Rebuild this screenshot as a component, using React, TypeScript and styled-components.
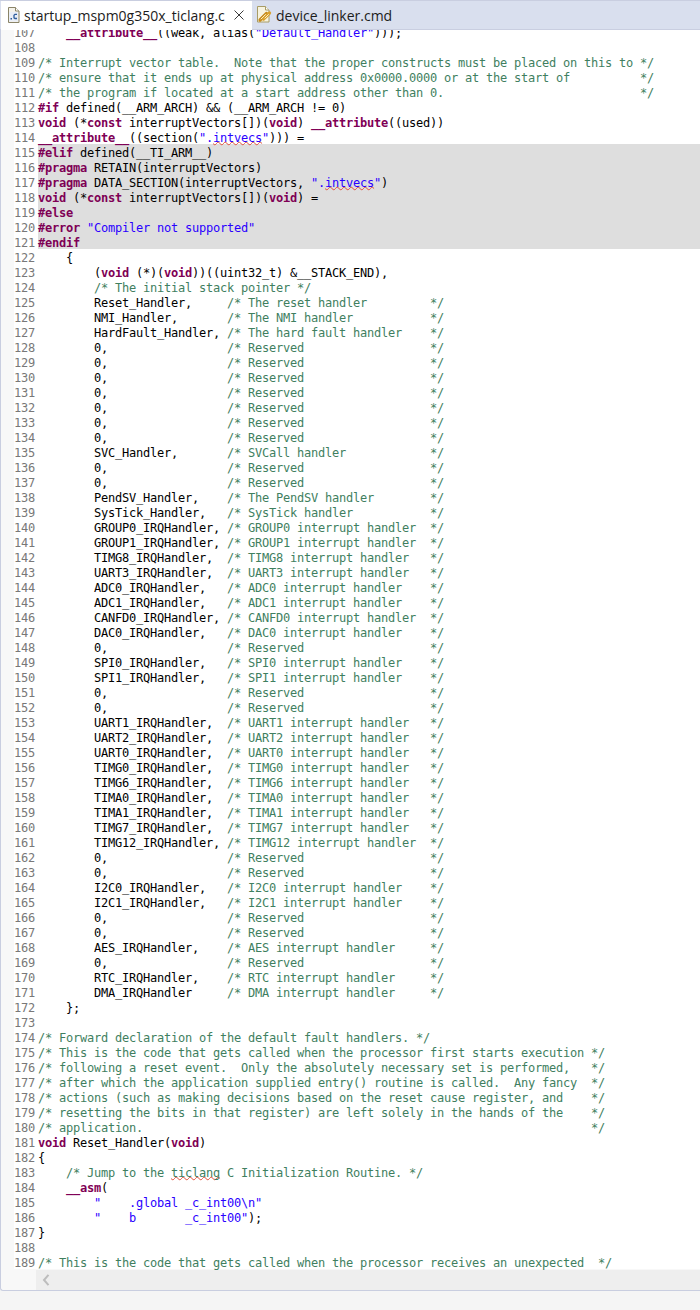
import React from "react";
import styled, { createGlobalStyle } from "styled-components";

const GlobalStyle = createGlobalStyle`
  html, body {
    margin: 0;
    padding: 0;
    background: #f5f5f5;
  }
`;

const Page = styled.div`
  width: 700px;
  height: 1310px;
  display: flex;
  flex-direction: column;
  overflow: hidden;
`;

const TabBar = styled.div`
  height: 30px;
  flex: none;
  display: flex;
  background: #d9dfee;
  border-top: 1px solid #c9cee0;
  border-bottom: 1px solid #c9cee0;
  box-sizing: border-box;
`;

const Tab = styled.div<{ $active?: boolean }>`
  display: flex;
  align-items: center;
  height: ${(p) => (p.$active ? "29px" : "100%")};
  box-sizing: border-box;
  padding-left: ${(p) => (p.$active ? "6px" : "4px")};
  padding-bottom: 1px;
  margin-left: ${(p) => (p.$active ? "1px" : "0")};
  width: ${(p) => (p.$active ? "251px" : "auto")};
  background: ${(p) => (p.$active ? "#ffffff" : "transparent")};
`;

const TabIcon = styled.svg`
  flex: none;
  margin-right: 4px;
`;

const TabLabel = styled.span`
  font-family: "Open Sans", sans-serif;
  font-size: 14px;
  line-height: 20px;
  padding-top: 2px;
  color: #1c1c1c;
  white-space: nowrap;
`;

const CloseButton = styled.svg`
  margin-left: 9px;
  flex: none;
`;

const Editor = styled.div`
  height: 1261px;
  flex: none;
  box-sizing: border-box;
  display: flex;
  flex-direction: column;
  background: #f8f8f8;
  border-left: 1px solid #c9cee0;
  border-bottom: 1px solid #c9cee0;
  border-bottom-left-radius: 3px;
`;

const Viewport = styled.div`
  height: 1240px;
  flex: none;
  overflow: hidden;
`;

const Lines = styled.div`
  margin-top: -6px;
`;

const Row = styled.div`
  display: flex;
  height: 15px;
  padding-left: 13px;
  font-family: "DejaVu Sans Mono", monospace;
  font-size: 12px;
  letter-spacing: -0.224px;
  line-height: 18px;
  white-space: pre;
`;

const LineNumber = styled.span`
  width: 21px;
  padding-right: 3px;
  flex: none;
  text-align: right;
  color: #787878;
  background: #ffffff;
`;

const Code = styled.span<{ $masked?: boolean }>`
  flex: 1;
  color: #000000;
  background: ${(p) => (p.$masked ? "#dedede" : "#ffffff")};
`;

// descenders and underscores hang over the next row, keep them above its background
const CodeText = styled.span`
  position: relative;
  z-index: 1;
`;

const Keyword = styled.span`
  color: #7f0055;
  font-weight: bold;
`;

const Comment = styled.span`
  color: #3f7f5f;
`;

const Str = styled.span`
  color: #2a00ff;
`;

const Misspelled = styled.span`
  text-decoration: underline wavy #e0503a 1px;
  text-decoration-skip-ink: none;
  text-underline-offset: -1px;
`;

const ScrollTrack = styled.div`
  height: 20px;
  flex: none;
  margin-left: 35px;
  display: flex;
  align-items: center;
  padding-left: 5px;
  background: #eeeeee;
`;

const COMMENT_WIDTH = 29;

// handler table, line 125 to 171
const vectors: [string, string][] = [
  ["Reset_Handler,", "The reset handler"],
  ["NMI_Handler,", "The NMI handler"],
  ["HardFault_Handler,", "The hard fault handler"],
  ["0,", "Reserved"],
  ["0,", "Reserved"],
  ["0,", "Reserved"],
  ["0,", "Reserved"],
  ["0,", "Reserved"],
  ["0,", "Reserved"],
  ["0,", "Reserved"],
  ["SVC_Handler,", "SVCall handler"],
  ["0,", "Reserved"],
  ["0,", "Reserved"],
  ["PendSV_Handler,", "The PendSV handler"],
  ["SysTick_Handler,", "SysTick handler"],
  ["GROUP0_IRQHandler,", "GROUP0 interrupt handler"],
  ["GROUP1_IRQHandler,", "GROUP1 interrupt handler"],
  ["TIMG8_IRQHandler,", "TIMG8 interrupt handler"],
  ["UART3_IRQHandler,", "UART3 interrupt handler"],
  ["ADC0_IRQHandler,", "ADC0 interrupt handler"],
  ["ADC1_IRQHandler,", "ADC1 interrupt handler"],
  ["CANFD0_IRQHandler,", "CANFD0 interrupt handler"],
  ["DAC0_IRQHandler,", "DAC0 interrupt handler"],
  ["0,", "Reserved"],
  ["SPI0_IRQHandler,", "SPI0 interrupt handler"],
  ["SPI1_IRQHandler,", "SPI1 interrupt handler"],
  ["0,", "Reserved"],
  ["0,", "Reserved"],
  ["UART1_IRQHandler,", "UART1 interrupt handler"],
  ["UART2_IRQHandler,", "UART2 interrupt handler"],
  ["UART0_IRQHandler,", "UART0 interrupt handler"],
  ["TIMG0_IRQHandler,", "TIMG0 interrupt handler"],
  ["TIMG6_IRQHandler,", "TIMG6 interrupt handler"],
  ["TIMA0_IRQHandler,", "TIMA0 interrupt handler"],
  ["TIMA1_IRQHandler,", "TIMA1 interrupt handler"],
  ["TIMG7_IRQHandler,", "TIMG7 interrupt handler"],
  ["TIMG12_IRQHandler,", "TIMG12 interrupt handler"],
  ["0,", "Reserved"],
  ["0,", "Reserved"],
  ["I2C0_IRQHandler,", "I2C0 interrupt handler"],
  ["I2C1_IRQHandler,", "I2C1 interrupt handler"],
  ["0,", "Reserved"],
  ["0,", "Reserved"],
  ["AES_IRQHandler,", "AES interrupt handler"],
  ["0,", "Reserved"],
  ["RTC_IRQHandler,", "RTC interrupt handler"],
  ["DMA_IRQHandler", "DMA interrupt handler"],
];

const source: string[] = [
  `    __attribute__((weak, alias("Default_Handler")));`,
  ``,
  `/* Interrupt vector table.  Note that the proper constructs must be placed on this to */`,
  `/* ensure that it ends up at physical address 0x0000.0000 or at the start of          */`,
  `/* the program if located at a start address other than 0.                            */`,
  `#if defined(__ARM_ARCH) && (__ARM_ARCH != 0)`,
  `void (*const interruptVectors[])(void) __attribute((used))`,
  `__attribute__((section(".intvecs"))) =`,
  `#elif defined(__TI_ARM__)`,
  `#pragma RETAIN(interruptVectors)`,
  `#pragma DATA_SECTION(interruptVectors, ".intvecs")`,
  `void (*const interruptVectors[])(void) =`,
  `#else`,
  `#error "Compiler not supported"`,
  `#endif`,
  `    {`,
  `        (void (*)(void))((uint32_t) &__STACK_END),`,
  `        /* The initial stack pointer */`,
  ...vectors.map(
    ([name, text]) =>
      `        ${name.padEnd(19)}/* ${text.padEnd(COMMENT_WIDTH - 3)}*/`
  ),
  `    };`,
  ``,
  `/* Forward declaration of the default fault handlers. */`,
  `/* This is the code that gets called when the processor first starts execution */`,
  `/* following a reset event.  Only the absolutely necessary set is performed,   */`,
  `/* after which the application supplied entry() routine is called.  Any fancy  */`,
  `/* actions (such as making decisions based on the reset cause register, and    */`,
  `/* resetting the bits in that register) are left solely in the hands of the    */`,
  `/* application.                                                                */`,
  `void Reset_Handler(void)`,
  `{`,
  `    /* Jump to the ticlang C Initialization Routine. */`,
  `    __asm(`,
  `        "    .global _c_int00\\n"`,
  `        "    b       _c_int00");`,
  `}`,
  ``,
  `/* This is the code that gets called when the processor receives an unexpected  */`,
];

// lines 115 to 121 sit in the inactive preprocessor branch
const isMasked = (lineNo: number) => lineNo >= 115 && lineNo <= 121;

function withSpelling(text: string) {
  return text.split(/(intvecs|ticlang)/).map((part, i) =>
    part === "intvecs" || part === "ticlang" ? (
      <Misspelled key={i}>{part}</Misspelled>
    ) : (
      part
    )
  );
}

// just enough of a C highlighter for this file
function highlight(line: string) {
  const pattern =
    /(\/\*.*?\*\/)|("(?:[^"\\]|\\.)*")|(#\w+|\b(?:void|const|__attribute__|__attribute|__asm)\b)/g;
  return line.split(pattern).map((part, i) => {
    if (!part) return null;
    const kind = i % 4;
    if (kind === 1) return <Comment key={i}>{withSpelling(part)}</Comment>;
    if (kind === 2) return <Str key={i}>{withSpelling(part)}</Str>;
    if (kind === 3) return <Keyword key={i}>{part}</Keyword>;
    return <React.Fragment key={i}>{part}</React.Fragment>;
  });
}

function SourceFileIcon() {
  return (
    <TabIcon width="13" height="16" viewBox="0 0 13 16">
      <path d="M1.500 .5h7l3.500 3.500v11.500h-10.500z" fill="#f4f2ea" stroke="#8a8468" />
      <path d="M8.500 .5v3.500h3.500" fill="#fff" stroke="#8a8468" />
      <rect x="2" y="5" width="9" height="9.500" fill="#e9eef7" />
      <rect x="3.500" y="11" width="1.500" height="1.500" fill="#2f5d9c" />
      <path d="M10 7.300h-2l-1 1v2.500l1 .7h2" fill="none" stroke="#2f5d9c" strokeWidth="1.300" />
    </TabIcon>
  );
}

function LinkerFileIcon() {
  return (
    <TabIcon width="16" height="17" viewBox="0 0 16 17">
      <path d="M1.500 .5h8l3.500 3.500v12h-11.500z" fill="#f7f3df" stroke="#a89c66" />
      <path d="M9.500 .5v3.500h3.500" fill="#fff" stroke="#a89c66" />
      <path d="M4 14l6.500-6.500" stroke="#c58a1c" strokeWidth="3.200" strokeLinecap="round" />
      <path d="M7.500 13l6-6" stroke="#d9a02c" strokeWidth="3.200" strokeLinecap="round" />
      <path d="M5 13l4.500-4.500M9 12l3.500-3.500" stroke="#fbeec2" strokeWidth="1" strokeLinecap="round" />
    </TabIcon>
  );
}

export default function App() {
  return (
    <Page>
      <GlobalStyle />
      <TabBar>
        <Tab $active>
          <SourceFileIcon />
          <TabLabel>startup_mspm0g350x_ticlang.c</TabLabel>
          <CloseButton width="10" height="10" viewBox="0 0 10 10">
            <path d="M.5 .5l9 9M9.500 .5l-9 9" stroke="#3a3a3a" strokeWidth="1" />
          </CloseButton>
        </Tab>
        <Tab>
          <LinkerFileIcon />
          <TabLabel>device_linker.cmd</TabLabel>
        </Tab>
      </TabBar>
      <Editor>
        <Viewport>
          <Lines>
            {source.map((line, i) => {
              const lineNo = 107 + i;
              return (
                <Row key={lineNo}>
                  <LineNumber>{lineNo}</LineNumber>
                  <Code $masked={isMasked(lineNo)}>
                    <CodeText>{highlight(line)}</CodeText>
                  </Code>
                </Row>
              );
            })}
          </Lines>
        </Viewport>
        <ScrollTrack>
          <svg width="10" height="12" viewBox="0 0 10 12">
            <path d="M7.500 .8L3 6l4.500 5.200" fill="none" stroke="#bdbdbd" strokeWidth="2" />
          </svg>
        </ScrollTrack>
      </Editor>
    </Page>
  );
}
